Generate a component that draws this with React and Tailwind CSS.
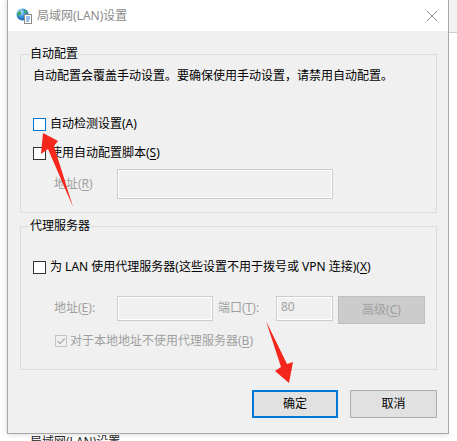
import React from "react";

const FONT = { fontFamily: '"Noto Sans","Noto Sans CJK SC",sans-serif' };

function Box({ blue }) {
  return (
    <span
      className={
        blue
          ? "w-[13px] h-[13px] border border-[#0078d7] bg-white shrink-0"
          : "w-[13px] h-[13px] border border-[#333333] bg-white shrink-0"
      }
    />
  );
}

function U({ children }) {
  return <span className="underline underline-offset-2 decoration-1">{children}</span>;
}

function Input({ className, children }) {
  return (
    <div
      className={
        "border border-[#cccccc] bg-[#f0f0f0] shadow-[inset_0_0_0_1px_#ffffff] text-[#a0a0a0] text-[12px] leading-[16px] " +
        className
      }
    >
      {children}
    </div>
  );
}

function Group({ label, children, className }) {
  return (
    <div className={"ml-[12px] mr-[11px] border border-[#dcdcdc] " + className}>
      <div className="-mt-[9px] ml-[8px] w-fit bg-[#f0f0f0] px-[1px] text-[12px] leading-[16px] text-black">
        {label}
      </div>
      {children}
    </div>
  );
}

export default function App() {
  return (
    <div className="relative w-[457px] h-[441px] bg-white overflow-hidden" style={FONT}>
      <div className="flex">
        <div className="w-[7px] h-[434px] bg-white" />
        {/* window */}
        <div className="w-[442px] h-[434px] flex flex-col border-l border-r border-b border-[#a8a8a8] bg-[#f0f0f0] shadow-[0_0_6px_rgba(0,0,0,0.18)]">
          {/* title bar */}
          <div className="h-[31px] bg-white flex items-center pl-[8px] pr-[8px]">
            <svg width="16" height="16" viewBox="0 0 16 16" className="shrink-0">
              <defs>
                <radialGradient id="g" cx="0.35" cy="0.3" r="0.8">
                  <stop offset="0" stopColor="#bfe6ff" />
                  <stop offset="0.5" stopColor="#2f8fd8" />
                  <stop offset="1" stopColor="#1b4f9a" />
                </radialGradient>
              </defs>
              <circle cx="6.5" cy="6.5" r="6" fill="url(#g)" />
              <path d="M3 3.5c1.5-.5 2.5.5 2 2s-2 1.5-2.5 3c-.8-1.5-.8-3.5.5-5z" fill="#3aa84a" />
              <path d="M8 2c1.5.3 3 1.5 3.3 3-.8.3-2 .2-2.5-.6-.4-.7-1-1.2-.8-2.4z" fill="#3aa84a" />
              <rect x="8.5" y="6.5" width="7" height="9" fill="#ffffff" stroke="#8a8a8a" />
              <path d="M10 9h4M10 11h4M10 13h3" stroke="#3b7dd8" strokeWidth="1" />
            </svg>
            <span className="ml-[5px] text-[12px] leading-[16px] text-[#8c8c8c]">局域网(LAN)设置</span>
            <div className="flex-1" />
            <svg width="12" height="12" viewBox="0 0 12 12" className="mr-[2px]">
              <path d="M1 1L11 11M11 1L1 11" stroke="#8c8c8c" strokeWidth="1" />
            </svg>
          </div>

          {/* content */}
          <div className="pt-[23px] flex flex-col">
            <Group label="自动配置" className="pb-[13px]">
              <div className="mt-[6px] pl-[12px] text-[12px] leading-[16px] text-black whitespace-nowrap">
                自动配置会覆盖手动设置。要确保使用手动设置，请禁用自动配置。
              </div>
              <div className="mt-[32px] pl-[12px] flex items-center h-[16px] gap-[4px] text-[12px] leading-[16px] text-black">
                <Box blue />
                <span>自动检测设置(A)</span>
              </div>
              <div className="mt-[13px] pl-[12px] flex items-center h-[16px] gap-[4px] text-[12px] leading-[16px] text-black">
                <Box />
                <span>
                  使用自动配置脚本(<U>S</U>)
                </span>
              </div>
              <div className="mt-[8px] pl-[33px] flex items-center">
                <span className="w-[63px] text-[12px] leading-[16px] text-[#a0a0a0]">
                  地址(<U>R</U>)
                </span>
                <Input className="w-[216px] h-[30px]" />
              </div>
            </Group>

            <Group label="代理服务器" className="mt-[13px] pb-[20px]">
              <div className="mt-[25px] pl-[12px] flex items-center h-[16px] gap-[4px] text-[12px] leading-[16px] text-black whitespace-nowrap">
                <Box />
                <span>
                  为 LAN 使用代理服务器(这些设置不用于拨号或 VPN 连接)(<U>X</U>)
                </span>
              </div>
              <div className="mt-[21px] pl-[33px] flex items-start">
                <span className="w-[63px] h-[24px] flex items-center text-[12px] leading-[16px] text-[#a0a0a0]">
                  地址(<U>E</U>):
                </span>
                <Input className="w-[96px] h-[25px]" />
                <span className="ml-[5px] w-[58px] h-[24px] flex items-center text-[12px] leading-[16px] text-[#a0a0a0]">
                  端口(<U>T</U>):
                </span>
                <Input className="w-[57px] h-[25px] pl-[4px] pt-[2px]">80</Input>
                <div className="ml-[5px] w-[87px] h-[28px] border border-[#bfbfbf] bg-[#cccccc] flex items-center justify-center text-[12px] leading-[16px] text-[#a0a0a0]">
                  高级(<U>C</U>)
                </div>
              </div>
              <div className="mt-[9px] pl-[34px] flex items-center h-[16px] gap-[3px] text-[12px] leading-[16px] text-[#a0a0a0]">
                <span className="w-[12px] h-[12px] border border-[#c4c4c4] bg-[#f0f0f0] flex items-center justify-center">
                  <svg width="10" height="10" viewBox="0 0 10 10">
                    <path d="M1.5 5.2L4 7.7L8.8 2.4" fill="none" stroke="#a8a8a8" strokeWidth="1.2" />
                  </svg>
                </span>
                <span>
                  对于本地地址不使用代理服务器(<U>B</U>)
                </span>
              </div>
            </Group>

            <div className="mt-[20px] pr-[11px] flex justify-end gap-[12px]">
              <div className="w-[86px] h-[28px] border-2 border-[#0078d7] bg-[#e1e1e1] flex items-center justify-center text-[12px] leading-[16px] text-black">
                确定
              </div>
              <div className="w-[87px] h-[28px] border border-[#adadad] bg-[#e1e1e1] flex items-center justify-center text-[12px] leading-[16px] text-black">
                取消
              </div>
            </div>
          </div>
        </div>
        {/* right backdrop */}
        <div className="w-[8px] h-[434px] bg-white">
          <div className="h-[33px] bg-[#f2f2f2] border-b border-[#cfcfcf]" />
        </div>
      </div>
      {/* behind window title */}
      <div className="h-[7px] overflow-hidden pl-[30px] text-[12px] leading-[16px] text-[#222222] whitespace-nowrap">
        局域网(LAN)设置
      </div>

      {/* annotation arrows */}
      <svg className="absolute inset-0 pointer-events-none" width="457" height="441" viewBox="0 0 457 441">
        <polygon points="43,133 58,141 54,146 73,207 48,149 41,154" fill="#f5261b" />
        <polygon points="266,321 287,364 293,362 289,383 275,371 281,367" fill="#f5261b" />
      </svg>
    </div>
  );
}
